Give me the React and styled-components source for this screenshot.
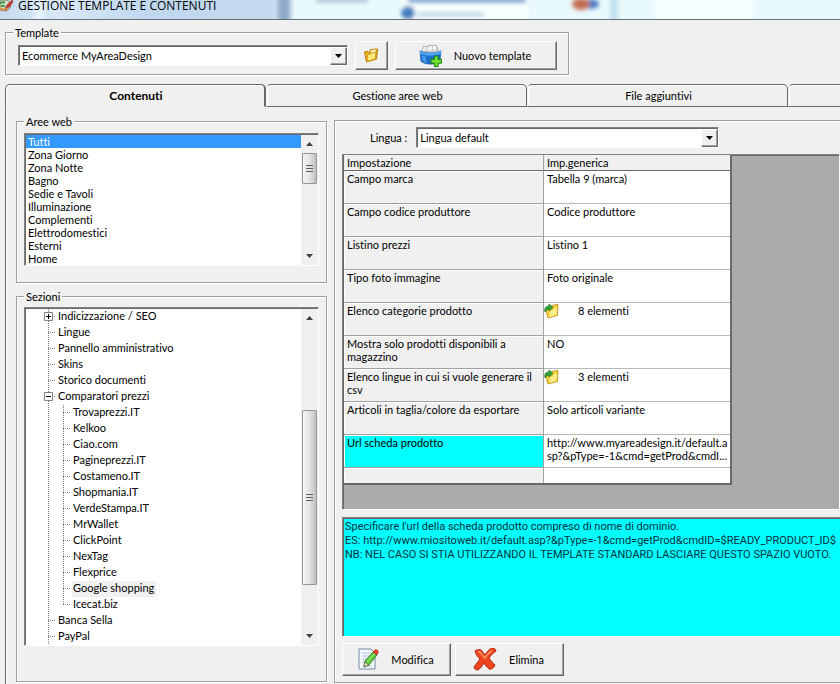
import React, { useState } from 'react';
import styled, { createGlobalStyle, css } from 'styled-components';

const GlobalStyle = createGlobalStyle`
  * {
    box-sizing: border-box;
  }

  body {
    margin: 0;
    background: #f0f0f0;
    color: #000;
    font: 11px/13px Lato, 'Liberation Sans', sans-serif;
    font-variant-ligatures: none;
  }

  button,
  select,
  textarea {
    font: inherit;
    font-variant-ligatures: none;
    color: inherit;
  }
`;

const raised = css`
  border: 1px solid;
  border-color: #fff #696969 #696969 #fff;
  box-shadow: inset -1px -1px 0 #a0a0a0;
`;

const sunken = css`
  border: 1px solid;
  border-color: #808080 #fff #fff #808080;
  box-shadow: inset 1px 1px 0 #696969;
`;

const etched = css`
  border: 1px solid #a0a0a0;
  box-shadow: 1px 1px 0 #fff, inset 1px 1px 0 #fff;
`;

const Window = styled.div`
  display: flex;
  flex-direction: column;
  min-height: 100vh;
  overflow: hidden;
`;

const TitleBar = styled.header`
  position: relative;
  display: flex;
  align-items: flex-start;
  gap: 4px;
  height: 20px;
  border-bottom: 1px solid #6a7078;
  background: linear-gradient(90deg, #c6dbf0 0, #d8e8f8 60px, #bfd7ef 150px, #c4daf0 270px, #eafafd 300px);
`;

const Backdrop = styled.svg`
  position: absolute;
  top: 0;
  left: 0;
`;

const Title = styled.h1`
  position: relative;
  margin: 0;
  font: 12px/12px 'Open Sans', 'Noto Sans', sans-serif;
  white-space: nowrap;
`;

const TitleIcon = styled.svg`
  position: relative;
`;

const Group = styled.fieldset`
  ${etched}
  min-width: 0;
  margin: 0;
  padding: ${props => props.$pad};
`;

const Legend = styled.legend`
  margin-left: ${props => props.$indent || 0}px;
  padding: 0 2px;
  background: #f0f0f0;
`;

const TemplateArea = styled.div`
  display: flex;
  padding: 6px 5px 9px;
`;

const TemplateRow = styled.div`
  display: flex;
  align-items: center;
  gap: 7px;
`;

const SelectBox = styled.span`
  ${sunken}
  position: relative;
  display: block;
  width: ${props => props.$width}px;
  height: 21px;
  background: #fff;
`;

const Select = styled.select`
  appearance: none;
  display: block;
  width: 100%;
  height: 19px;
  padding: 0 20px 0 3px;
  border: 0;
  outline: 0;
  border-radius: 0;
  background: transparent;
`;

const SelectArrow = styled.span`
  ${raised}
  position: absolute;
  top: 1px;
  right: 0;
  display: flex;
  align-items: center;
  justify-content: center;
  width: 17px;
  height: 18px;
  background: #f0f0f0;
  pointer-events: none;
`;

const Button = styled.button`
  ${raised}
  display: flex;
  align-items: center;
  justify-content: center;
  gap: 12px;
  width: ${props => props.$width}px;
  height: ${props => props.$height}px;
  padding: 0 2px 0 0;
  background: #f0f0f0;
`;

const TabBar = styled.div`
  display: flex;
  padding-left: 5px;
`;

const Tab = styled.button`
  flex: 0 0 261px;
  height: 23px;
  padding: 0 0 0 2px;
  border: 1px solid #696969;
  border-left-color: ${props => (props.$active ? '#696969' : '#f0f0f0')};
  border-bottom-color: ${props => (props.$active ? '#f0f0f0' : '#696969')};
  border-right-width: ${props => (props.$active ? 2 : 1)}px;
  border-radius: 5px 5px 0 0;
  background: #f0f0f0;
  box-shadow: inset 1px 1px 0 #fff;
  font-size: ${props => (props.$active ? 12 : 11)}px;
  font-weight: ${props => (props.$active ? 700 : 400)};

  &:last-child {
    flex: 1 0 0;
    border-right: 0;
    border-top-right-radius: 0;
  }
`;

const TabPanel = styled.main`
  display: flex;
  flex: 1;
  align-items: flex-start;
  gap: 7px;
  margin-left: 5px;
  padding: 8px 0 1px 10px;
  border-left: 1px solid #696969;
  box-shadow: inset 1px 0 0 #fff;
`;

const SideColumn = styled.div`
  display: flex;
  flex: 0 0 311px;
  flex-direction: column;
  gap: 7px;
`;

const ScrollFrame = styled.div`
  ${sunken}
  display: flex;
  padding: 1px 0 0 1px;
  background: #fff;
`;

const List = styled.ul`
  flex: 1;
  min-width: 0;
  margin: 0;
  padding: 0;
  list-style: none;
`;

const Option = styled.li`
  height: 13px;
  padding-left: 2px;
  line-height: 14px;
  cursor: default;
  background: ${props => (props.$selected ? '#3399ff' : 'transparent')};
  color: ${props => (props.$selected ? '#fff' : '#000')};
`;

const Track = styled.div`
  display: flex;
  flex-direction: column;
  align-items: center;
  width: 17px;
  background: #f0f0f0;
`;

const TrackArrow = styled.svg`
  flex: none;
  width: 7px;
  height: 18px;
`;

const TrackSpace = styled.div`
  flex: ${props => props.$grow} 0 0;
`;

const Thumb = styled.div`
  display: flex;
  align-items: center;
  justify-content: center;
  width: 15px;
  height: ${props => props.$size}px;
  border: 1px solid #979797;
  border-radius: 1px;
  background: linear-gradient(90deg, #f5f5f5, #e4e4e6 50%, #bfbfc4);
`;

const TreeItem = styled.li`
  display: flex;
  height: 16px;
  padding-left: 22px;
  line-height: 13px;
  cursor: default;
`;

const dots = '#808080 0 1px, transparent 1px 2px';

const Guide = styled.span`
  position: relative;
  flex: none;
  width: ${props => (props.$branch ? 9 : 15)}px;
  background: repeating-linear-gradient(180deg, ${dots}) 0 0 / 1px ${props => (props.$end ? '8px' : '100%')} no-repeat
    ${props => props.$branch && css`, repeating-linear-gradient(90deg, ${dots}) 0 7px / 8px 1px no-repeat`};
`;

const Toggle = styled.svg`
  position: absolute;
  top: 3px;
  left: -4px;
`;

const TreeLabel = styled.span`
  padding: 0 2px 0 1px;
  background: ${props => (props.$selected ? '#f0f0f0' : 'transparent')};
`;

const Details = styled.section`
  ${etched}
  display: flex;
  flex: 1;
  flex-direction: column;
  align-self: stretch;
  min-width: 0;
  margin-top: 5px;
  padding: 6px 0 6px 7px;
  border-right: 0;
`;

const LanguageRow = styled.div`
  display: flex;
  align-items: center;
  gap: 9px;
  padding: 0 0 6px 28px;
`;

const GridArea = styled.div`
  ${sunken}
  padding: 0 0 24px 1px;
  background: #ababab;
`;

const Table = styled.table`
  width: 388px;
  border-collapse: separate;
  border-spacing: 0;
  table-layout: fixed;
  border-right: 2px solid #696969;
  border-bottom: 2px solid #696969;
`;

const HeadCell = styled.th`
  width: ${props => props.$width};
  height: 16px;
  padding: 1px 3px 1px;
  border-right: 1px solid #a0a0a0;
  border-bottom: 1px solid #696969;
  background: #f0f0f0;
  font-weight: 400;
  text-align: left;

  &:last-child {
    border-right: 0;
  }
`;

const NameCell = styled.th`
  height: ${props => (props.$short ? 15 : 33)}px;
  padding: 1px 3px 0;
  border-right: 1px solid #a0a0a0;
  border-bottom: ${props => (props.$short ? 0 : 1)}px solid #a0a0a0;
  background: ${props => (props.$selected ? '#00ffff' : '#f0f0f0')};
  box-shadow: inset 1px 1px 0 #fff;
  font-weight: 400;
  text-align: left;
  vertical-align: top;
`;

const ValueCell = styled.td`
  padding: 1px 3px 0;
  border-bottom: ${props => (props.$short ? 0 : 1)}px solid #b8b8b8;
  background: #fff;
  vertical-align: top;
  white-space: pre;
`;

const Elements = styled.span`
  display: flex;
  gap: 18px;
  height: 13px;
  margin-left: -3px;
`;

const Help = styled.textarea`
  ${sunken}
  display: block;
  height: 120px;
  margin-top: 7px;
  padding: 2px 0 0 2px;
  border-right: 0;
  border-radius: 0;
  outline: 0;
  resize: none;
  overflow: hidden;
  background: #00ffff;
  color: #003040;
  font: 11px/14px Roboto, 'Liberation Sans', sans-serif;
  white-space: pre;
`;

const Actions = styled.div`
  display: flex;
  gap: 4px;
  padding-top: 6px;
`;

const areas = [
  'Tutti',
  'Zona Giorno',
  'Zona Notte',
  'Bagno',
  'Sedie e Tavoli',
  'Illuminazione',
  'Complementi',
  'Elettrodomestici',
  'Esterni',
  'Home',
];

const sections = [
  { label: 'Indicizzazione / SEO', toggle: 'plus' },
  { label: 'Lingue' },
  { label: 'Pannello amministrativo' },
  { label: 'Skins' },
  { label: 'Storico documenti' },
  { label: 'Comparatori prezzi', toggle: 'minus' },
  { label: 'Trovaprezzi.IT', child: true },
  { label: 'Kelkoo', child: true },
  { label: 'Ciao.com', child: true },
  { label: 'Pagineprezzi.IT', child: true },
  { label: 'Costameno.IT', child: true },
  { label: 'Shopmania.IT', child: true },
  { label: 'VerdeStampa.IT', child: true },
  { label: 'MrWallet', child: true },
  { label: 'ClickPoint', child: true },
  { label: 'NexTag', child: true },
  { label: 'Flexprice', child: true },
  { label: 'Google shopping', child: true },
  { label: 'Icecat.biz', child: true, end: true },
  { label: 'Banca Sella' },
  { label: 'PayPal' },
];

const settings = [
  { name: 'Campo marca', value: 'Tabella 9 (marca)' },
  { name: 'Campo codice produttore', value: 'Codice produttore' },
  { name: 'Listino prezzi', value: 'Listino 1' },
  { name: 'Tipo foto immagine', value: 'Foto originale' },
  { name: 'Elenco categorie prodotto', value: '8 elementi', list: true },
  { name: 'Mostra solo prodotti disponibili a magazzino', value: 'NO' },
  { name: 'Elenco lingue in cui si vuole generare il csv', value: '3 elementi', list: true },
  { name: 'Articoli in taglia/colore da esportare', value: 'Solo articoli variante' },
  {
    name: 'Url scheda prodotto',
    value: 'http://www.myareadesign.it/default.a\nsp?&pType=-1&cmd=getProd&cmdI...',
    selected: true,
  },
];

const helpText = `Specificare l'url della scheda prodotto compreso di nome di dominio.
ES: http://www.miositoweb.it/default.asp?&pType=-1&cmd=getProd&cmdID=$READY_PRODUCT_ID$
NB: NEL CASO SI STIA UTILIZZANDO IL TEMPLATE STANDARD LASCIARE QUESTO SPAZIO VUOTO.`;

const tabs = ['Contenuti', 'Gestione aree web', 'File aggiuntivi', ''];

// What shows through the glass title bar
const GlassBackdrop = () => (
  <Backdrop width="840" height="19" aria-hidden="true">
    <defs>
      <filter id="glass" x="-20%" y="-80%" width="140%" height="260%">
        <feGaussianBlur stdDeviation="2" />
      </filter>
    </defs>
    <rect x="294" width="546" height="19" fill="#e9fafc" />
    <g filter="url(#glass)">
      <rect x="34" y="-4" width="10" height="28" fill="#e8f4fc" />
      <rect x="278" y="-4" width="12" height="28" fill="#8fabc9" />
      <rect x="316" y="-3" width="52" height="6" fill="#b4cadd" />
      <rect x="402" y="-5" width="126" height="30" fill="#f8ffff" />
      <rect x="408" y="-4" width="118" height="7" fill="#7fa9cf" />
      <circle cx="408" cy="13" r="7" fill="#3f7fc0" />
      <rect x="418" y="12" width="66" height="5" fill="#c3d9e8" />
      <rect x="610" y="-4" width="8" height="28" fill="#c0e2ee" />
      <rect x="655" y="-4" width="98" height="28" fill="#f4ffff" />
      <ellipse cx="592" cy="4" rx="7" ry="5" fill="#4f7fc4" />
      <ellipse cx="581" cy="4" rx="9" ry="6" fill="#c46c50" />
    </g>
  </Backdrop>
);

const AppIcon = () => (
  <TitleIcon width="14" height="12" viewBox="0 0 14 12" aria-hidden="true">
    <path d="M0 0h7l4 3-1 5-4 3-6-1z" fill="#d5dccb" stroke="#8b7a68" />
    <path d="M0 3l5-1M1 6h4" stroke="#3f9b45" strokeWidth="2" />
    <path d="M12 0L7 5l-2 4 4-2 4-5z" fill="#d8382c" stroke="#7d2a22" strokeWidth=".6" />
    <path d="M0 8l4 2 4-1" stroke="#e08a2c" strokeWidth="1.5" fill="none" />
  </TitleIcon>
);

const FolderIcon = () => (
  <svg width="16" height="16" viewBox="0 0 16 16" aria-hidden="true">
    <path d="M1.5 4l3-.8 1 1.5 1-.2 1-3 7-.5-1 10-10 3z" fill="#f3b51c" stroke="#b97a0c" />
    <path d="M7.5 2l6-.5-.5 3-5.5 1z" fill="#fffbe0" stroke="#d8980e" strokeWidth=".7" />
    <path d="M4.5 6.5L8 6l1-1.5 4-.5-.8 7-8 2.5z" fill="#ffe977" stroke="#c88a0a" strokeWidth=".8" />
  </svg>
);

const BoxPlusIcon = () => (
  <svg width="23" height="23" viewBox="0 0 24 24" aria-hidden="true">
    <path d="M3 8L5 2l4 1 1-2 4 1 4-1 2 6z" fill="#fafafa" stroke="#9a9a9a" strokeWidth=".8" />
    <path d="M7 3v4M10 2l-1 5M14 2v5M18 3v4" stroke="#b5b5b5" strokeWidth=".8" />
    <path d="M1 7c5 3 17 3 22 0l-1 11c-4 4-16 4-20 0z" fill="#1b6ecb" stroke="#1557a4" strokeWidth=".6" />
    <path d="M1 7c5 3 17 3 22 0v3c-5 3-17 3-22 0z" fill="#4fa6ee" />
    <path d="M3 12l1 6 4 2-1-7z" fill="#4b9ae6" />
    <path d="M16 12.5h4V16h3.5v4H20v3.5h-4V20h-3.5v-4H16z" fill="#6fe02c" stroke="#187a12" />
  </svg>
);

const LinkedFolderIcon = () => (
  <svg width="16" height="15" viewBox="0 0 16 15" aria-hidden="true">
    <path d="M2 6l4-.6 2-4 6-1-.6 11L4 14z" fill="#f2cf3c" stroke="#b48a10" strokeWidth=".8" />
    <path d="M6 7l3-.6 1-2 3-.6-.6 7L5.5 13z" fill="#fff08c" />
    <path d="M1 8C0 4 2 2 5 2V0l4 3.5L5 7V5C3 5 2 6 1 8z" fill="#35a536" stroke="#1c6e22" strokeWidth=".7" />
  </svg>
);

const EditIcon = () => (
  <svg width="22" height="24" viewBox="0 0 22 24" aria-hidden="true">
    <path d="M2 1h12l4 4v16H2z" fill="#f5f9fe" stroke="#7389a8" />
    <path d="M5 5h8M5 8h8M5 11h6M5 14h4M5 18h10" stroke="#a9bfda" strokeWidth="1.2" />
    <path d="M7 19l1-6 8-9 4 3-8 10z" fill="#5ccb3c" stroke="#23751d" strokeWidth=".8" />
    <path d="M10 14l8-9" stroke="#b5f08e" />
    <path d="M7 19l1-5 3.5 3z" fill="#f3dfb0" stroke="#555" strokeWidth=".6" />
    <path d="M16 4l2-2c2-1 4 1 3 3l-1 2z" fill="#e8432e" stroke="#9d2317" strokeWidth=".6" />
  </svg>
);

const DeleteIcon = () => (
  <svg width="24" height="24" viewBox="0 0 24 24" aria-hidden="true">
    <path
      d="M2 3c3-2 6-2 7 0l3 4c2-3 4-6 7-7 2 0 4 1 4 3-3 2-5 4-7 7 2 3 4 5 6 7-1 3-4 5-6 4-2-2-4-4-5-6-2 3-4 6-6 7-2 0-4-1-4-3 2-3 4-5 6-8-2-2-4-4-5-8z"
      fill="#f0441c"
      stroke="#b02a10"
    />
    <path d="M5 4c2-1 3 1 4 3l3 3c2-3 4-6 7-7" fill="none" stroke="#ff9770" strokeWidth="1.5" />
  </svg>
);

const ComboBox = ({ id, width, value }) => (
  <SelectBox $width={width}>
    <Select id={id} aria-label={id} defaultValue={value}>
      <option>{value}</option>
    </Select>
    <SelectArrow>
      <svg width="7" height="4" aria-hidden="true">
        <path d="M0 0h7L3.5 4z" />
      </svg>
    </SelectArrow>
  </SelectBox>
);

const ScrollBar = ({ before, size, after }) => (
  <Track aria-hidden="true">
    <TrackArrow viewBox="0 0 7 18">
      <path d="M0 11h7L3.5 7z" fill="#404040" />
    </TrackArrow>
    <TrackSpace $grow={before} />
    <Thumb $size={size}>
      <svg width="7" height="8">
        <path d="M0 .5h7M0 3.5h7M0 6.5h7" stroke="#606060" />
      </svg>
    </Thumb>
    <TrackSpace $grow={after} />
    <TrackArrow viewBox="0 0 7 18">
      <path d="M0 7h7L3.5 11z" fill="#404040" />
    </TrackArrow>
  </Track>
);

const ToggleBox = ({ kind }) => (
  <Toggle width="9" height="9" aria-hidden="true">
    <path d="M.5 .5h8v8h-8z" fill="#fff" stroke="#808080" />
    <path d={kind === 'plus' ? 'M2 4.5h5M4.5 2v5' : 'M2 4.5h5'} stroke="#000" />
  </Toggle>
);

const App = () => {
  const [tab, setTab] = useState(0);
  const [area, setArea] = useState('Tutti');
  const [section, setSection] = useState('Google shopping');

  return (
    <Window>
      <GlobalStyle />
      <TitleBar>
        <GlassBackdrop />
        <AppIcon />
        <Title>GESTIONE TEMPLATE E CONTENUTI</Title>
      </TitleBar>

      <TemplateArea>
        <Group $pad="2px 11px 4px 12px">
          <Legend $indent={-5}>Template</Legend>
          <TemplateRow>
            <ComboBox id="template" width={330} value="Ecommerce MyAreaDesign" />
            <Button type="button" aria-label="Apri" $width={33} $height={29}>
              <FolderIcon />
            </Button>
            <Button type="button" $width={162} $height={29}>
              <BoxPlusIcon />
              Nuovo template
            </Button>
          </TemplateRow>
        </Group>
      </TemplateArea>

      <TabBar role="tablist">
        {tabs.map((label, i) => (
          <Tab key={i} type="button" role="tab" aria-selected={tab === i} $active={tab === i} onClick={() => setTab(i)}>
            {label}
          </Tab>
        ))}
      </TabBar>

      <TabPanel>
        <SideColumn>
          <Group $pad="5px 7px 16px">
            <Legend>Aree web</Legend>
            <ScrollFrame>
              <List role="listbox" aria-label="Aree web">
                {areas.map(name => (
                  <Option
                    key={name}
                    role="option"
                    aria-selected={name === area}
                    $selected={name === area}
                    onClick={() => setArea(name)}
                  >
                    {name}
                  </Option>
                ))}
              </List>
              <ScrollBar before={0} size={31} after={1} />
            </ScrollFrame>
          </Group>

          <Group $pad="4px 7px 35px">
            <Legend>Sezioni</Legend>
            <ScrollFrame>
              <List role="tree" aria-label="Sezioni">
                {sections.map(({ label, toggle, child, end }) => (
                  <TreeItem
                    key={label}
                    role="treeitem"
                    aria-selected={label === section}
                    onClick={() => setSection(label)}
                  >
                    {child && <Guide />}
                    <Guide $branch $end={end}>
                      {toggle && <ToggleBox kind={toggle} />}
                    </Guide>
                    <TreeLabel $selected={label === section}>{label}</TreeLabel>
                  </TreeItem>
                ))}
              </List>
              <ScrollBar before={83} size={175} after={42} />
            </ScrollFrame>
          </Group>
        </SideColumn>

        <Details>
          <LanguageRow>
            <label htmlFor="lingua">Lingua :</label>
            <ComboBox id="lingua" width={303} value="Lingua default" />
          </LanguageRow>

          <GridArea>
            <Table>
              <thead>
                <tr>
                  <HeadCell $width="200px">Impostazione</HeadCell>
                  <HeadCell>Imp.generica</HeadCell>
                </tr>
              </thead>
              <tbody>
                {settings.map(({ name, value, list, selected }) => (
                  <tr key={name}>
                    <NameCell scope="row" $selected={selected}>
                      {name}
                    </NameCell>
                    <ValueCell>
                      {list ? (
                        <Elements>
                          <LinkedFolderIcon />
                          {value}
                        </Elements>
                      ) : (
                        value
                      )}
                    </ValueCell>
                  </tr>
                ))}
                <tr>
                  <NameCell $short />
                  <ValueCell $short />
                </tr>
              </tbody>
            </Table>
          </GridArea>

          <Help readOnly aria-label="Descrizione" value={helpText} />

          <Actions>
            <Button type="button" $width={109} $height={33}>
              <EditIcon />
              Modifica
            </Button>
            <Button type="button" $width={109} $height={33}>
              <DeleteIcon />
              Elimina
            </Button>
          </Actions>
        </Details>
      </TabPanel>
    </Window>
  );
};

export default App;
